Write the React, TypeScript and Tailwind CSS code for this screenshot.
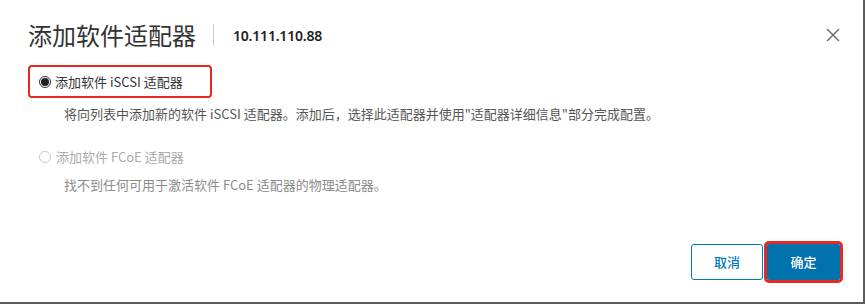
import React, { useState } from "react";

const cjk = "font-['Noto_Sans_CJK_SC','Noto_Sans',sans-serif]";

const Radio = ({ checked, disabled }: { checked?: boolean; disabled?: boolean }) => (
  <span
    className={`flex items-center justify-center w-[12px] h-[12px] rounded-full border ${
      disabled ? "border-[#c8c8c8]" : "border-[#333]"
    } bg-white`}
  >
    {checked && <span className="w-[8px] h-[8px] rounded-full bg-[#222]" />}
  </span>
);

export default function App() {
  const [choice] = useState("iscsi");

  return (
    <div
      className={`w-[865px] h-[304px] bg-white border-r-2 border-b-2 border-[#5c5c5c] flex flex-col pl-[28px] pr-[20px] ${cjk}`}
    >
      {/* header */}
      <div className="flex items-center justify-between mt-[19px] h-[32px] pr-[3px]">
        <div className="flex items-center">
          <h2 className="text-[24px] leading-[32px] text-[#333] font-normal">
            添加软件适配器
          </h2>
          <span className="w-px h-[22px] bg-[#ccc] ml-[17px] mr-[19px]" />
          <span className="text-[14px] font-semibold text-[#222] font-['Noto_Sans',sans-serif] tracking-[-0.2px]">
            10.111.110.88
          </span>
        </div>
        <button className="w-[14px] h-[14px] text-[#666]" aria-label="close">
          <svg viewBox="0 0 14 14" width="14" height="14">
            <path d="M1 1 L13 13 M13 1 L1 13" stroke="currentColor" strokeWidth="1.4" fill="none" />
          </svg>
        </button>
      </div>

      {/* options */}
      <div className="mt-[14px] flex flex-col">
        <div className="w-[184px] h-[33px] border-2 border-[#e42a22] rounded-[4px] flex items-center pl-[9px]">
          <Radio checked={choice === "iscsi"} />
          <span className="ml-[4px] text-[13px] text-[#333]">添加软件 iSCSI 适配器</span>
        </div>
        <p className="ml-[36px] mt-[7px] text-[13px] leading-[18px] text-[#565656]">
          将向列表中添加新的软件 iSCSI 适配器。添加后，选择此适配器并使用"适配器详细信息"部分完成配置。
        </p>

        <div className="flex items-center mt-[25px] ml-[11px] h-[18px]">
          <Radio disabled />
          <span className="ml-[5px] text-[13px] text-[#aaa]">添加软件 FCoE 适配器</span>
        </div>
        <p className="ml-[36px] mt-[10px] text-[13px] leading-[18px] text-[#8c8c8c]">
          找不到任何可用于激活软件 FCoE 适配器的物理适配器。
        </p>
      </div>

      {/* footer */}
      <div className="mt-auto mb-[19px] flex justify-end items-center">
        <button className="w-[72px] h-[36px] border border-[#0079b8] rounded-[3px] text-[13px] font-medium text-[#0079b8] bg-white">
          取消
        </button>
        <div className="ml-px border-[3px] border-[#e42a22] rounded-[5px]">
          <button className="w-[73px] h-[36px] rounded-[2px] bg-[#0072ad] text-[13px] font-medium text-white">
            确定
          </button>
        </div>
      </div>
    </div>
  );
}
